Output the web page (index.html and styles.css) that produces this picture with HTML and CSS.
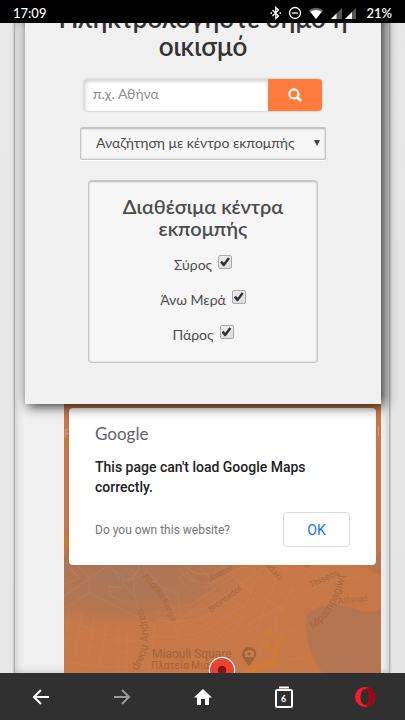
FILE: index.html
```html
<!DOCTYPE html>
<html lang="el">
<head>
<meta charset="utf-8">
<meta name="viewport" content="width=device-width, initial-scale=1">
<title>Αναζήτηση περιοχής</title>
<link rel="stylesheet" href="styles.css">
</head>
<body>
<header class="status">
  <time>17:09</time>
  <div class="status-icons">
    <svg width="12" height="14" viewBox="0 0 12 14" fill="none" stroke="#fff" stroke-width="1.3"><path d="M2.500 4 8.500 10 5.800 12.500V1.500L8.500 4 2.500 10"/><path d="M.5 7h1.500M9.500 7H11" stroke-width="1.600"/></svg>
    <svg width="14" height="14" viewBox="0 0 14 14" fill="none" stroke="#fff" stroke-width="1.300"><circle cx="7" cy="7" r="5.500"/><path d="M4 7h6"/></svg>
    <svg class="wifi" width="16" height="14" viewBox="0 0 16 14"><path d="M8 13 .8 4.200Q8-.8 15.200 4.200Z" fill="#666"/><path d="M8 13 2.200 5.800Q8 2.200 13.800 5.800Z" fill="#fff"/></svg>
    <svg class="signal" width="13" height="14" viewBox="0 0 13 14"><path d="M1 13 12 2v11Z" fill="#555"/><path d="M1 13 6.500 7.500V13Z" fill="#fff"/></svg>
    <svg width="13" height="14" viewBox="0 0 13 14"><path d="M1 13 12 2v11Z" fill="#555"/><path d="M1 13 8 6v7Z" fill="#fff"/></svg>
  </div>
  <span class="battery">21%</span>
</header>

<main class="viewport">
  <div class="page">
    <section class="card">
      <h1>Πληκτρολογήστε δήμο ή οικισμό</h1>
      <form class="search">
        <input type="text" placeholder="π.χ. Αθήνα" aria-label="Δήμος ή οικισμός">
        <button type="button" aria-label="Αναζήτηση">
          <svg width="14" height="14" viewBox="0 0 14 14" fill="none" stroke="#fff" stroke-width="2.200"><circle cx="5.900" cy="5.900" r="4.500"/><path d="m9 9 4 4" stroke-width="2.600"/></svg>
        </button>
      </form>
      <div class="picker">
        <select aria-label="Κέντρο εκπομπής"><option>Αναζήτηση με κέντρο εκπομπής</option></select>
        <span class="arrow" aria-hidden="true"></span>
      </div>
      <fieldset class="centers">
        <h2>Διαθέσιμα κέντρα εκπομπής</h2>
        <label>Σύρος <input type="checkbox" checked></label>
        <label>Άνω Μερά <input type="checkbox" checked></label>
        <label>Πάρος <input type="checkbox" checked></label>
      </fieldset>
    </section>

    <section class="map">
      <svg class="tiles" viewBox="0 0 317 270" preserveAspectRatio="xMinYMin slice">
        <defs>
          <radialGradient id="hill"><stop offset="0" stop-color="#a8775b"/><stop offset=".55" stop-color="#ae7552" stop-opacity=".8"/><stop offset="1" stop-color="#c87848" stop-opacity="0"/></radialGradient>
          <path id="karga" d="M78 173Q101 194 109 224"/>
          <path id="andreou" d="M73 267Q94 236 76 200"/>
          <path id="bay" d="M116 217Q144 198 150 152"/>
        </defs>
        <rect width="317" height="270" fill="#c87747"/>
        <ellipse cx="60" cy="172" rx="145" ry="62" fill="url(#hill)"/>
        <path d="M0 130v22q6-8 4-22zM0 40v6l5-6z" fill="#cb7b30"/>
        <path d="M242 213q4-8 17-11 17-2 26 1l15 5 17-1v63h-57q-19-20-18-57zM303 163l14-17v23q-9 1-14-6z" fill="#b37552"/>
        <g fill="none" stroke="#c48663" stroke-width="1.300" opacity=".38">
          <path d="M0 192 45 161 64 178 75 166V158M0 205 25 189 73 213 92 226M25 189V174L14 162M2 180 15 174 5 163M45 161 72 194M44 182l15 2v-8l17-3M46 182v10l18 6M70 172q-1 22 5 34t14 34M67 166l32 17 9 20 9 48M79 163l17 18 18 10 3 20"/>
          <path d="M0 216 79 241M0 233 72 259M5 205 1 247M17 209 12 251M30 213 24 255M43 218 36 260M54 223v47M64 228l-2 42M74 231l-3 39M82 239l-4 31M0 258 40 263 100 262M42 236l45 1M44 248l47-1M91 218l-6 52M96 221l19-4 25-19"/>
          <path d="M89 199q21 8 41 0l42-28M91 207q28 9 52-4l57-39M93 216q32 5 55-8l50-34M88 232q30 4 54-6l49-32 44-9M96 245l62-19 60-36M104 255l75-32 46-24"/>
          <path d="M113 162q10 19 35 17l33-17M121 162q9 10 24 8l25-10M135 163l26 25M157 162l32 28M184 162l26 21M198 161l-28 70M215 168l-23 57M232 175l-38 75M175 179l47 29M162 191l41 28M151 203l40 29M135 213l37 34"/>
          <path d="M218 163l43 17 22 20M237 162l24 16 38-6M260 179l-59 31-66 48M275 172l20 30M195 218l19-10 62-34M214 212l-8 58M205 231l33-6M198 258l42-4"/>
          <path d="M115 172q7 15 12 14M122 168q12 14 18 10M139 184q11-3 18-10M115 260l38-12 25-17M109 226l45-18"/>
        </g>
        <g fill="#cf7b38"><circle cx="205" cy="229" r="4"/><path d="m200 241 4-4 3 6-3 4zM208 249l5-16q3-3 5 1l-5 18-6 4zM178 265l34-11 3 7-30 9h-7zM120 269l8-3 10 1 2 3z"/></g>
        <g class="street">
          <text><textPath href="#karga">Andrea Karga</textPath></text>
          <text class="road"><textPath href="#andreou">dreou Andrea</textPath></text>
          <text transform="translate(147 178) rotate(-30)">Averof</text>
          <text transform="translate(147 209) rotate(-37)">Brontadoi</text>
          <text transform="translate(197 157) rotate(48)">oudaki</text>
          <text transform="translate(232 156) rotate(35)">ous</text>
          <text transform="translate(247 184) rotate(-25)">Thiseos</text>
          <text transform="translate(274 200) rotate(-6)">Athinas</text>
          <text class="road" transform="translate(133 8)"><textPath href="#bay">Mpampagiwt</textPath></text>
        </g>
        <g class="place"><text x="88" y="254">Miaouli Square</text><text class="greek" x="87" y="265">Πλατεία Μιαούλη</text></g>
        <path d="M185 262q-7-8-7-12a7 7 0 0 1 14 0q0 4-7 12z" fill="#9d6339"/>
        <path d="M181 247h2l1-1h3l1 1h2v6h-9z" fill="#c77b48"/><circle cx="185" cy="250" r="1.500" fill="#9d6339"/>
        <circle cx="158" cy="266" r="12.600" fill="#ea4235" stroke="#fff" stroke-width="1.200"/><circle cx="158" cy="266" r="4.300" fill="#811411"/>
        <g fill="#d9976d"><text x="0" y="34" font-size="12">P</text><path d="M314 22h1v10h-1z"/></g>
      </svg>
      <div class="dialog">
        <div class="brand">Google</div>
        <p class="message">This page can't load Google Maps correctly.</p>
        <div class="actions"><a href="#">Do you own this website?</a><button type="button">OK</button></div>
      </div>
    </section>
  </div>
</main>

<nav class="toolbar">
  <button type="button" aria-label="Πίσω"><svg width="20" height="20" viewBox="0 0 20 20" fill="none" stroke="#fff" stroke-width="2"><path d="M18 10H3M10 3 3 10l7 7"/></svg></button>
  <button type="button" aria-label="Εμπρός"><svg width="20" height="20" viewBox="0 0 20 20" fill="none" stroke="#999" stroke-width="2"><path d="M2 10h15M10 3l7 7-7 7"/></svg></button>
  <button type="button" aria-label="Αρχική"><svg width="20" height="20" viewBox="0 0 20 20" fill="#fff"><path d="M10 2 1 10.500h3V18h4v-6h4v6h4v-7.500h3z"/></svg></button>
  <button type="button" aria-label="Καρτέλες" class="tabs"><svg width="20" height="24" viewBox="0 0 20 24" fill="none" stroke="#fff"><path d="M5 2.500h10" stroke-width="2"/><rect x="2" y="5" width="16" height="17" rx="1" stroke-width="2"/></svg><span>6</span></button>
  <button type="button" aria-label="Opera"><svg width="20" height="20" viewBox="0 0 20 20"><path fill="#ff1b2d" fill-rule="evenodd" d="M10 0a10 10 0 1 0 0 20 10 10 0 0 0 0-20zm0 2.200c2.800 0 4.500 3.500 4.500 7.800s-1.700 7.800-4.500 7.800S5.500 14.300 5.500 10 7.200 2.200 10 2.200z"/><path fill="#a70014" d="M10 2.200Q13-.2 16.700 2.600a10 10 0 0 1 0 14.800Q13 20.200 10 17.800c2.800 0 4.500-3.500 4.500-7.800S12.800 2.200 10 2.200z"/></svg></button>
</nav>
</body>
</html>
```
FILE: styles.css
```css
* { box-sizing: border-box; }
body {
  margin: 0;
  height: 100vh;
  display: flex;
  flex-direction: column;
  font-family: Lato, "Noto Sans", sans-serif;
  color: #4c4c4c;
}
button { border: 0; padding: 0; font: inherit; }
svg { display: block; }

.status {
  flex: none;
  height: 23px;
  padding: 2px 13px 0;
  display: flex;
  align-items: center;
  background: #000;
  color: #fff;
  font: 500 13px Lato, sans-serif;
}
.status-icons { display: flex; align-items: center; gap: 6px; margin-left: auto; }
.status-icons .signal { margin-right: -5px; }
.battery { margin-left: 9px; font-weight: 600; }

.viewport {
  flex: 1;
  min-height: 0;
  overflow: hidden;
  padding: 0 16px 0 15px;
  display: flex;
  background: linear-gradient(135deg, #e9e9e9, #e5e5e5);
}
.page {
  flex: 1;
  display: flex;
  flex-direction: column;
  padding: 0 8px 0 10px;
  background: #f0f0f0;
  box-shadow: 0 0 2px 1px #999, inset 0 0 8px #bbb;
}
.card {
  position: relative;
  z-index: 1;
  flex: none;
  margin-top: -19px;
  padding: 0 52px 41px;
  background: #f0f0f0;
  box-shadow: 3px 2px 12px 0 rgba(0, 0, 0, .85);
  display: flex;
  flex-direction: column;
  align-items: center;
}
h1 {
  margin: 0 -28px 19px;
  font-size: 26px;
  line-height: 28px;
  font-weight: 600;
  text-align: center;
  color: #333;
}
.search {
  display: flex;
  width: calc(100% - 14px);
  height: 32px;
  border-radius: 4px;
  box-shadow: 0 0 2px #aaa;
}
.search input {
  flex: 1;
  min-width: 0;
  border: 0;
  border-radius: 4px 0 0 4px;
  padding: 0 9px 3px;
  background: #fff;
  box-shadow: inset 1px 2px 4px #ccc;
  font: inherit;
  font-size: 14px;
}
.search input::placeholder { color: #8e8e8e; opacity: 1; }
.search button {
  width: 54px;
  display: grid;
  place-items: center;
  background: #ff7c3e;
  border-radius: 0 4px 4px 0;
}
.picker { position: relative; width: calc(100% - 6px); margin-top: 16px; }
.picker select {
  appearance: none;
  width: 100%;
  height: 33px;
  padding: 0 15px 3px;
  border: 1px solid #c6c6c6;
  border-top-width: 2px;
  border-radius: 2px;
  background: #f6f6f6;
  box-shadow: inset 0 0 2px #bbb, 0 1px #fff;
  color: #4c4c4c;
  font: inherit;
  font-size: 14px;
}
.arrow {
  position: absolute;
  right: 6px;
  top: 13px;
  border: 3px solid transparent;
  border-top: 6px solid #444;
  border-bottom: 0;
}
.centers {
  width: calc(100% - 22px);
  margin: 20px 0 0;
  padding: 13px 20px 6px;
  border: 1px solid #c6c6c6;
  border-top-width: 2px;
  border-radius: 4px;
  background: #f6f6f6;
  box-shadow: inset 0 0 2px #bbb;
  display: flex;
  flex-direction: column;
  align-items: center;
}
h2 {
  margin: 0 0 12px;
  font-size: 20px;
  line-height: 22px;
  font-weight: 600;
  text-align: center;
}
label {
  height: 35px;
  display: flex;
  gap: 6px;
  font-size: 14px;
  line-height: 28px;
}
label input {
  appearance: none;
  width: 14px;
  height: 14px;
  margin: 4px 0 0;
  border: 1px solid #aaa;
  border-radius: 2px;
  background: linear-gradient(#eee, #ddd);
}
label input:checked::before {
  content: "";
  display: block;
  width: 10px;
  height: 10px;
  margin: 1px;
  background: #333;
  clip-path: polygon(0 54%, 18% 38%, 38% 57%, 78% 3%, 98% 18%, 42% 93%, 31% 93%);
}

.map {
  position: relative;
  flex: 1;
  min-height: 0;
  margin-left: 39px;
  padding: 4px 5px;
  overflow: hidden;
  background: #c87747;
  font-family: Roboto, sans-serif;
}
.tiles { position: absolute; inset: 0; width: 100%; height: 100%; }
.street { fill: #a8683f; font-size: 9px; }
.road { font-size: 11px; }
.place { fill: #a2633d; font-size: 12px; }
.greek { font-size: 10px; }
.dialog {
  position: relative;
  height: 157px;
  padding: 16px 26px;
  border-radius: 4px;
  background: #fff;
  box-shadow: 0 0 1px #666;
}
.brand {
  font: 17px/19px Lato, sans-serif;
  color: #5f6368;
}
.message {
  margin: 14px 0 15px;
  font-size: 14px;
  line-height: 20px;
  font-weight: 500;
  color: #202124;
}
.actions { display: flex; align-items: center; justify-content: space-between; }
.actions a { color: #757575; font-size: 12px; text-decoration: none; }
.actions button {
  width: 67px;
  height: 35px;
  border: 1px solid #dadce0;
  border-radius: 4px;
  background: #fff;
  color: #1a73e8;
  font-size: 14px;
}

.toolbar {
  flex: none;
  height: 47px;
  display: grid;
  grid-template-columns: repeat(5, 1fr);
  background: #303030;
}
.toolbar button { display: grid; place-items: center; background: none; color: #fff; }
.tabs svg, .tabs span { grid-area: 1 / 1; }
.tabs span { padding-top: 3px; font-size: 9px; font-weight: 700; }
```
